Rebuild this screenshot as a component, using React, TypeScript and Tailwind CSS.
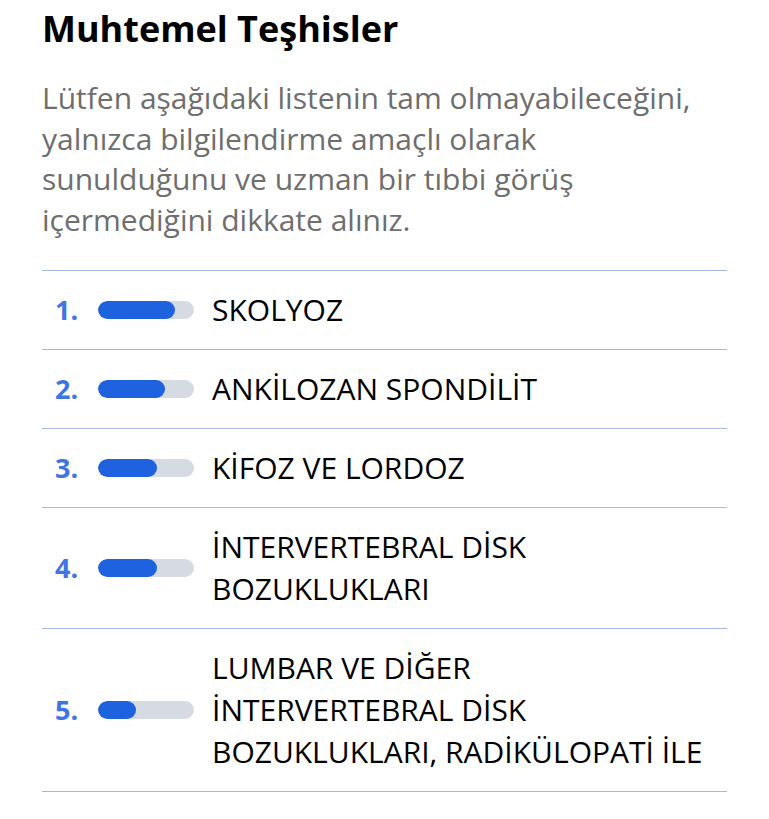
import React from "react";

const items = [
  { n: 1, label: "SKOLYOZ", pct: 80 },
  { n: 2, label: "ANKİLOZAN SPONDİLİT", pct: 70 },
  { n: 3, label: "KİFOZ VE LORDOZ", pct: 61 },
  { n: 4, label: "İNTERVERTEBRAL DİSK BOZUKLUKLARI", pct: 61 },
  { n: 5, label: "LUMBAR VE DİĞER İNTERVERTEBRAL DİSK BOZUKLUKLARI, RADİKÜLOPATİ İLE", pct: 40 },
];

export default function App() {
  return (
    <div className="min-h-[819px] bg-white px-[42px] pt-[7px] font-['Open_Sans',sans-serif]">
      <h1 className="text-[36px] font-bold leading-[44px] text-black">Muhtemel Teşhisler</h1>
      <p className="mt-[27px] max-w-[656px] text-[30px] leading-[40.5px] text-[#6e6e6e]">
        Lütfen aşağıdaki listenin tam olmayabileceğini, yalnızca bilgilendirme amaçlı olarak sunulduğunu ve uzman bir tıbbi görüş içermediğini dikkate alınız.
      </p>
      <ul className="mt-[30px] border-t border-[#a9b7dc]">
        {items.map((it) => (
          <li key={it.n} className="flex items-center border-b border-[#a9b7dc] py-[18px]">
            <span className="w-[56px] shrink-0 pl-[13px] text-[27px] font-bold leading-[42px] text-[#3f74e3]">{it.n}.</span>
            <div className="h-[18px] w-[96px] shrink-0 overflow-hidden rounded-full bg-[#d6dae3]">
              <div className="h-full rounded-full bg-[#1e62df]" style={{ width: `${it.pct}%` }} />
            </div>
            <span className="ml-[18px] max-w-[498px] text-[30px] leading-[42px] text-black">{it.label}</span>
          </li>
        ))}
      </ul>
    </div>
  );
}
